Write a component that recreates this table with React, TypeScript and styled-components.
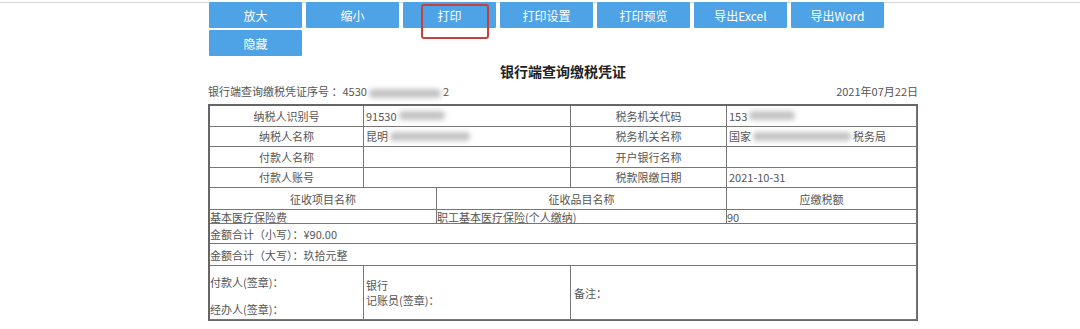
import React from "react"
import styled, { createGlobalStyle } from "styled-components"

const GlobalStyle = createGlobalStyle`
  *, *::before, *::after {
    box-sizing: border-box;
  }
  html, body {
    margin: 0;
    padding: 0;
    background: #ffffff;
    font-family: "Noto Sans CJK SC", "Noto Sans", "Liberation Sans", sans-serif;
    color: #555;
  }
`

const TopRule = styled.div`
  height: 3px;
  border-bottom: 1px solid #d4d4d4;
  margin-bottom: -1px;
`

const Page = styled.div`
  position: relative;
  margin-left: 208px;
  width: 710px;
`

const Toolbar = styled.div`
  display: flex;
  flex-wrap: wrap;
  gap: 2px 4px;
  padding-left: 1px;
`

const ToolButton = styled.button`
  width: 93px;
  height: 26px;
  border: 0;
  border-radius: 1px;
  padding: 0;
  background: #4ea3e6;
  color: #ffffff;
  font-family: "Noto Sans CJK SC", "Liberation Sans", sans-serif;
  font-size: 12px;
  cursor: pointer;
`

const Annotation = styled.div`
  position: absolute;
  left: 213px;
  top: 2px;
  width: 68px;
  height: 35px;
  border: 2px solid #c9403a;
  border-radius: 3px;
  pointer-events: none;
`

const Title = styled.h1`
  margin: 5px 0 0;
  height: 21px;
  line-height: 21px;
  text-align: center;
  font-size: 14px;
  font-weight: bold;
  color: #222;
`

const MetaRow = styled.div`
  display: flex;
  justify-content: space-between;
  align-items: center;
  height: 16px;
  line-height: 16px;
  font-size: 11px;
  color: #555;
  margin: 1px 0 5px;
`

// redacted part of a value: a soft grey smudge
const Smudge = styled.span<{ $w: number }>`
  display: inline-block;
  width: ${(p) => p.$w}px;
  height: 9px;
  margin: 0 2px;
  background: #c4c4c4;
  border-radius: 4px;
  filter: blur(2.5px);
  vertical-align: middle;
`

const Sheet = styled.div`
  border: 2px solid #666;
  border-right-width: 1px;
  border-bottom-width: 1px;
  font-size: 11px;
  color: #555;
`

const Band = styled.div<{ $cols: string; $rows: string }>`
  display: grid;
  grid-template-columns: ${(p) => p.$cols};
  grid-template-rows: ${(p) => p.$rows};
`

const Cell = styled.div<{ $align?: "center" | "left"; $pad?: number }>`
  display: flex;
  align-items: center;
  justify-content: ${(p) => (p.$align === "center" ? "center" : "flex-start")};
  padding-left: ${(p) => p.$pad ?? 0}px;
  border-right: 1px solid #777;
  border-bottom: 1px solid #777;
  white-space: nowrap;
  min-width: 0;
`

const SignCell = styled(Cell)`
  flex-direction: column;
  align-items: flex-start;
  justify-content: space-between;
  padding: 8px 0 2px;
`

const StackCell = styled(Cell)`
  flex-direction: column;
  align-items: flex-start;
  justify-content: center;
  padding-top: 1px;
  line-height: 15px;
`

const buttons = ["放大", "缩小", "打印", "打印设置", "打印预览", "导出Excel", "导出Word", "隐藏"]

const basics: [string, React.ReactNode, string, React.ReactNode][] = [
  ["纳税人识别号", <>91530<Smudge $w={46} /></>, "税务机关代码", <>153<Smudge $w={46} /></>],
  ["纳税人名称", <>昆明<Smudge $w={80} /></>, "税务机关名称", <>国家<Smudge $w={98} />税务局</>],
  ["付款人名称", "", "开户银行名称", ""],
  ["付款人账号", "", "税款限缴日期", "2021-10-31"]
]

const App: React.FC = () => {
  return (
    <>
      <GlobalStyle />
      <TopRule />
      <Page>
        <Toolbar>
          {buttons.map((label) => (
            <ToolButton key={label} children={label} />
          ))}
        </Toolbar>
        <Annotation />
        <Title>银行端查询缴税凭证</Title>
        <MetaRow>
          <span>
            银行端查询缴税凭证序号 ：4530<Smudge $w={72} />2
          </span>
          <span>2021年07月22日</span>
        </MetaRow>
        <Sheet>
          <Band $cols="154px 207px 156px 1fr" $rows="repeat(4, 20.5px)">
            {basics.map(([a, b, c, d]) => (
              <React.Fragment key={a}>
                <Cell $align="center">{a}</Cell>
                <Cell $pad={2}>{b}</Cell>
                <Cell $align="center">{c}</Cell>
                <Cell $pad={2}>{d}</Cell>
              </React.Fragment>
            ))}
          </Band>
          <Band $cols="227px 290px 1fr" $rows="22px 14px">
            <Cell $align="center">征收项目名称</Cell>
            <Cell $align="center">征收品目名称</Cell>
            <Cell $align="center">应缴税额</Cell>
            <Cell>基本医疗保险费</Cell>
            <Cell>职工基本医疗保险(个人缴纳)</Cell>
            <Cell>90</Cell>
          </Band>
          <Band $cols="1fr" $rows="20px 22px">
            <Cell>金额合计（小写）：¥90.00</Cell>
            <Cell>金额合计（大写）：玖拾元整</Cell>
          </Band>
          <Band $cols="154px 207px 1fr" $rows="54px">
            <SignCell>
              <span>付款人(签章)：</span>
              <span>经办人(签章)：</span>
            </SignCell>
            <StackCell $pad={2}>
              <span>银行</span>
              <span>记账员(签章)：</span>
            </StackCell>
            <Cell $pad={3}>备注：</Cell>
          </Band>
        </Sheet>
      </Page>
    </>
  )
}

export default App
